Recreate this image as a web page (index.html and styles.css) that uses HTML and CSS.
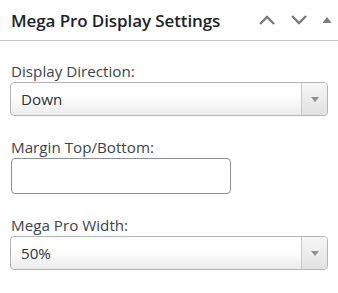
FILE: index.html
```html
<!DOCTYPE html>
<html lang="en">
<head>
  <meta charset="UTF-8">
  <meta name="viewport" content="width=device-width, initial-scale=1.0">
  <title>Mega Pro Display Settings</title>
  <link rel="stylesheet" href="styles.css">
</head>
<body>
  <div class="widget">
    <div class="widget-head">
      <h2 class="widget-title">Mega Pro Display Settings</h2>
      <div class="widget-actions">
        <button class="icon-btn" aria-label="Move up">
          <svg width="18" height="12" viewBox="0 0 18 12"><path d="M2 10 L9 3 L16 10" fill="none" stroke="#787c82" stroke-width="2.4"/></svg>
        </button>
        <button class="icon-btn" aria-label="Move down">
          <svg width="18" height="12" viewBox="0 0 18 12"><path d="M2 2 L9 9 L16 2" fill="none" stroke="#787c82" stroke-width="2.4"/></svg>
        </button>
        <button class="icon-btn icon-toggle" aria-label="Toggle panel">
          <svg width="10" height="8" viewBox="0 0 10 8"><path d="M0.5 7 L5 1 L9.5 7 Z" fill="#787c82"/></svg>
        </button>
      </div>
    </div>

    <div class="widget-body">
      <div class="field">
        <label for="direction">Display Direction:</label>
        <div class="select-wrap">
          <select id="direction" class="select">
            <option>Down</option>
            <option>Up</option>
          </select>
          <span class="select-arrow"></span>
        </div>
      </div>

      <div class="field">
        <label for="margin">Margin Top/Bottom:</label>
        <input type="text" id="margin" class="text-input">
      </div>

      <div class="field">
        <label for="width">Mega Pro Width:</label>
        <div class="select-wrap">
          <select id="width" class="select">
            <option>50%</option>
            <option>100%</option>
          </select>
          <span class="select-arrow"></span>
        </div>
      </div>
    </div>
  </div>
</body>
</html>
```

FILE: styles.css
```css
* {
  margin: 0;
  padding: 0;
  box-sizing: border-box;
}
body {
  background: #fff;
  font-family: "Open Sans", "Noto Sans", sans-serif;
  color: #3c434a;
}
.widget {
  width: 338px;
}
.widget-head {
  display: flex;
  justify-content: space-between;
  align-items: center;
  height: 41px;
  border-bottom: 1px solid #c3c4c7;
  padding-left: 11px;
}
.widget-title {
  font-size: 17px;
  font-weight: 600;
  color: #1d2327;
  letter-spacing: -0.1px;
}
.widget-actions {
  display: flex;
  align-items: center;
  gap: 14px;
  padding-right: 6px;
}
.icon-btn {
  background: none;
  border: none;
  display: flex;
  align-items: center;
  cursor: pointer;
}
.widget-body {
  padding: 19px 10px 0 10px;
}
.field {
  margin-bottom: 20px;
}
.field label {
  display: block;
  font-size: 15.2px;
  line-height: 22px;
  padding-left: 1px;
  color: #3c434a;
}
.select-wrap {
  position: relative;
  width: 318px;
}
.select {
  appearance: none;
  -webkit-appearance: none;
  width: 100%;
  height: 34px;
  border: 1px solid #b4b4b4;
  border-radius: 4px;
  background: linear-gradient(#fff 40%, #ececec);
  font-family: inherit;
  font-size: 15.2px;
  color: #2c3338;
  padding: 0 10px;
  outline: none;
}
.select-arrow {
  position: absolute;
  top: 1px;
  right: 1px;
  bottom: 1px;
  width: 26px;
  border-left: 1px solid #c8c8c8;
  border-radius: 0 3px 3px 0;
  background: linear-gradient(#f6f6f6, #e2e2e2);
  pointer-events: none;
}
.select-arrow::after {
  content: "";
  position: absolute;
  top: 14px;
  left: 9px;
  border-left: 4px solid transparent;
  border-right: 4px solid transparent;
  border-top: 5px solid #8c8f94;
}
.text-input {
  display: block;
  width: 220px;
  height: 36px;
  margin-left: 1px;
  border: 1px solid #8c8f94;
  border-radius: 4px;
  font-family: inherit;
  font-size: 15px;
  padding: 0 8px;
  outline: none;
}
```
